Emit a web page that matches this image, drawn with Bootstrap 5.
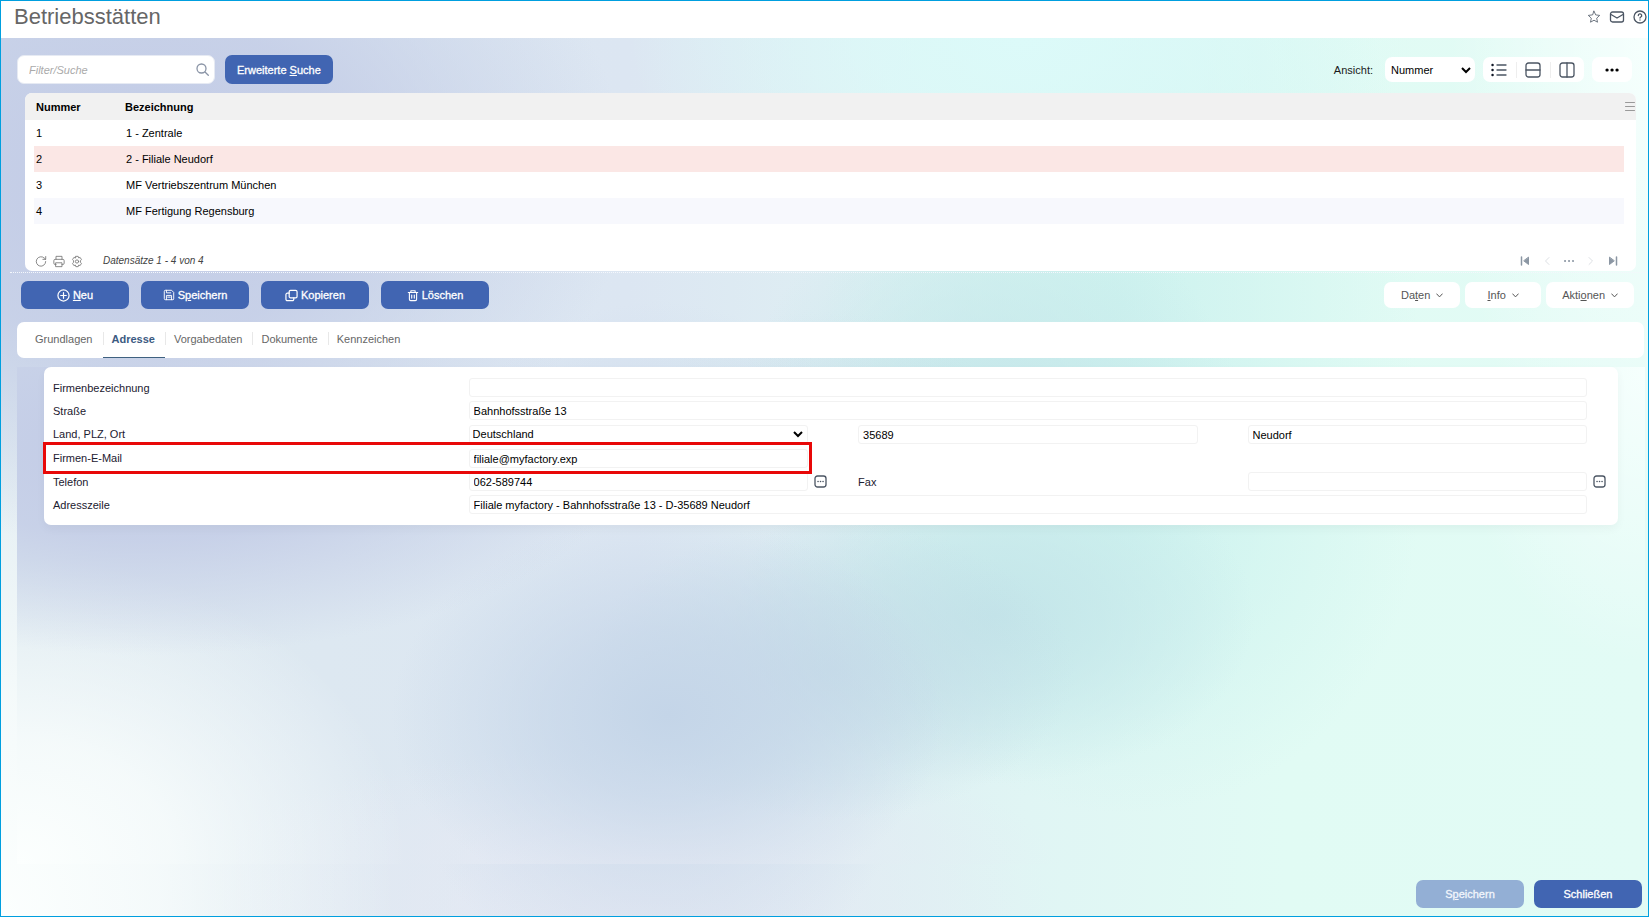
<!DOCTYPE html>
<html lang="de">
<head>
<meta charset="utf-8">
<meta name="viewport" content="width=device-width, initial-scale=1">
<title>Betriebsstätten</title>
<link rel="stylesheet" href="https://cdn.jsdelivr.net/npm/bootstrap@5.3.0/dist/css/bootstrap.min.css">
<style>
  :root { --mf-blue: #4165b2; --mf-frame: #009fdf; }
  body { font-family: "Liberation Sans", Arial, sans-serif; font-size: 11px; line-height: 16px; color: #1a1a1a; }
  .wash {
    background:
      radial-gradient(ellipse 12% 60% at 100% 0%, #f6fffd 0%, #f6fffd00 100%),
      radial-gradient(ellipse 24% 26% at 62% 0%, #dcfaf9 0%, #dcfaf9b3 40%, #dcfaf900 100%),
      radial-gradient(ellipse 30% 42% at 8% 16%, #c2cbe6 0%, #c2cbe6cc 45%, #c2cbe600 100%),
      radial-gradient(ellipse 17% 40% at 40% 70%, #c4d5e8 0%, #c4d5e8a6 42%, #c4d5e800 100%),
      radial-gradient(ellipse 15% 30% at 50% 61%, #c3dbe7cc 0%, #c3dbe780 42%, #c3dbe700 100%),
      radial-gradient(ellipse 16% 34% at 60% 50%, #c3e5e9 0%, #c3e5e9a6 42%, #c3e5e900 100%),
      radial-gradient(ellipse 18% 60% at 68% 30%, #cef3ef 0%, #cef3efa6 42%, #cef3ef00 100%),
      radial-gradient(ellipse 24% 62% at 0% 100%, #fcfffe 0%, #fafefdcc 40%, #fafefd00 100%),
      radial-gradient(ellipse 26% 24% at 38% 100%, #e6eaf4 0%, #e6eaf400 100%),
      linear-gradient(90deg, #deeaf0 0%, #dce6f2 38%, #e0f5f4 62%, #e1fbf4 78%, #e2fbf5 100%);
  }
  .app { border: 1px solid var(--mf-frame); }
  .titlebar { height: 37px; padding: 0 1px 6px 13px; }
  .titlebar h1 { font-size: 22px; line-height: 30px; color: #666; font-weight: 400; }
  svg { display: block; fill: none; stroke: currentColor; stroke-width: 1.3; stroke-linecap: round; stroke-linejoin: round; }
  .icon-btn { border: 0; background: none; padding: 0; color: #4b5563; }
  .btn { font-size: 11px; line-height: 16px; border: 0; border-radius: 7px; padding: 0 12px; }
  .btn-mf { --bs-btn-bg: var(--mf-blue); --bs-btn-color: #fff; --bs-btn-hover-bg: #36569b; --bs-btn-hover-color: #fff;
    --bs-btn-disabled-bg: #93afd5; --bs-btn-disabled-color: #f2f6fc; --bs-btn-disabled-opacity: 1; }
  .btn-action { width: 108px; height: 28px; gap: 3px; -webkit-text-stroke: 0.3px; }
  .btn-soft { --bs-btn-bg: #fff; --bs-btn-color: #555; --bs-btn-hover-bg: #f4f7fb; height: 26px; min-width: 76px; gap: 6px; }
  .btn-soft svg { stroke-width: 1; }
  .btn-soft.btn-more { min-width: 40px; height: 25px; }
  .searchbar { padding: 17px 16px 0 16px; }
  .searchbox { width: 198px; height: 29px; background: #fff; border-radius: 7px; padding: 0 5px 0 11px; border: 1px solid #e6eaf3; }
  .searchbox input { border: 0; outline: 0; min-width: 0; font-style: italic; padding: 0; background: none; }
  .searchbox input::placeholder { color: #aaa; }
  .searchbox .icon-btn { color: #8a94a6; }
  .btn-search { height: 29px; margin-left: 10px; -webkit-text-stroke: 0.3px; }
  .pill { background: #fff; height: 25px; border-radius: 7px; }
  .pill button { padding: 0 9px 0 8px; }
  .pill button + button { border-left: 1px solid #eee; }
  .form-select { font-size: 11px; line-height: 16px; color: #000; border: 0; background-color: #fff; background-size: 10px 10px; 
    background-image: url("data:image/svg+xml,%3Csvg xmlns='http://www.w3.org/2000/svg' viewBox='0 0 10 10'%3E%3Cpath d='M1 3l4 4 4-4' fill='none' stroke='%23000' stroke-width='2'/%3E%3C/svg%3E"); }
  .view-select { width: 90px; height: 25px; border-radius: 7px; padding: 0 18px 0 6px; background-position: right 4px center; }
  .list-card { margin: 9px 12px 0 24px; background: #fff; border-radius: 7px; overflow: hidden; }
  .grid-table { font-size: 11px; line-height: 16px; color: #000; width: 100%; border-collapse: collapse; }
  .grid-table td, .grid-table th { height: 26px; padding: 0 2px; }
  .grid-table thead th { height: 27px; background: #f1f1f1; font-weight: 700; }
  .grid-table th + th { padding-left: 1px; }
  .grid-table th:first-child, .grid-table td:first-child { width: 90px; }
  .grid-table .picked td { background: #fbe7e5; }
  .grid-table .striped td { background: #f7f8fd; }
  .list-body { padding: 0 12px 0 9px; background: linear-gradient(#f1f1f1 27px, #fff 27px); }
  .list-menu { position: absolute; right: 1px; top: 8px; color: #999; }
  .list-foot { padding: 27px 18px 0 10px; height: 47px; }
  .list-foot .icon-btn { color: #777; }
  .list-foot svg { stroke-width: 1; }
  .list-foot i { font-size: 10px; margin-left: 20px; color: #444; }
  .record-actions { border-top: 1px dotted #f4f7fc; margin: 1px 0 0 9px; padding: 8px 14px 0 11px; }
  .tab-strip { margin: 13px 4px 0 16px; background: #fff; border-radius: 7px; height: 36px; padding-left: 9px; }
  .tab-strip .nav-link { color: #666; padding: 9px 10px 0 9px; height: 36px; line-height: 16px; }
  .tab-strip .nav-item { position: relative; }
  .tab-strip .nav-item + .nav-item::before { content: ""; position: absolute; left: 0; top: 10px; height: 13px; border-left: 1px solid #e8e8e8; }
  .tab-strip .nav-link.active { color: #3c5a82; font-weight: 700; border-bottom: 1px solid #3f6180; }
  .detail { margin: 9px 3px 0 16px; padding: 0 27px 24px; }
  .address-card { background: #fff; border-radius: 7px; padding: 9px 31px 9px 9px; box-shadow: 0 4px 10px #0000000a; }
  .address-row { display: grid; grid-template-columns: 14fr 13fr 13fr 13fr; column-gap: 50px; height: 23px; align-items: center; }
  .address-row.tall { height: 24px; }
  .address-row label { color: #1c2030; }
  .span-rest { grid-column: 2 / -1; }
  .field { width: 100%; flex: 0 0 100%; height: 19px; border: 1px solid #f2f2f2; border-radius: 3px; padding: 1px 4px 0; color: #000; background-color: #fff; min-width: 0; }
  .form-select.field { padding: 0 20px 0 3px; border: 1px solid #f2f2f2; background-position: right 4px center; }
  .field + .icon-btn { margin-left: 6px; }
  .marker { position: relative; }
  .marker::after { content: ""; position: absolute; left: -10px; top: -4px; height: 32px; width: calc(50% + 2px); border: 3px solid #e80808; pointer-events: none; }
  .footer-bar { padding: 16px 6px 8px; gap: 10px; }
</style>
</head>
<body>
<div class="app min-vh-100 d-flex flex-column">
  <header class="titlebar d-flex justify-content-between align-items-center bg-white">
    <h1 class="m-0">Betriebsstätten</h1>
    <div class="d-flex align-items-center gap-2">
      <button class="icon-btn" type="button" aria-label="Favorit"><svg width="14" height="14" viewBox="0 0 14 14" stroke="#777"><path stroke-width=".8" d="M7 1.200l1.700 3.700 4 .5-3 2.800.8 4L7 10.200l-3.500 2 .8-4-3-2.800 4-.5z"/></svg></button>
      <button class="icon-btn" type="button" aria-label="Nachricht"><svg width="16" height="14" viewBox="0 0 16 14"><rect x="1.500" y="2" width="13" height="10" rx="2"/><path d="M2 4.500l6 3.500 6-3.500"/></svg></button>
      <button class="icon-btn" type="button" aria-label="Hilfe"><svg width="14" height="14" viewBox="0 0 14 14"><circle cx="7" cy="7" r="6"/><path d="M5.300 5.500a1.700 1.700 0 1 1 2.500 1.500c-.5.300-.8.500-.8 1M7 10v.1"/></svg></button>
    </div>
  </header>

  <main class="wash flex-grow-1 d-flex flex-column">
    <div class="searchbar d-flex align-items-center">
      <div class="searchbox d-flex align-items-center">
        <input class="flex-grow-1" type="text" placeholder="Filter/Suche" aria-label="Filter/Suche">
        <button class="icon-btn" type="button" aria-label="Suchen"><svg width="13" height="13" viewBox="0 0 13 13"><circle cx="5.500" cy="5.500" r="4.500"/><path d="M9 9l3.300 3.300"/></svg></button>
      </div>
      <button class="btn btn-mf btn-search" type="button">Erweiterte <u>S</u>uche</button>
      <div class="ms-auto d-flex align-items-center">
        <label class="me-2 pe-1" for="view">Ansicht:</label>
        <select class="form-select view-select me-2" id="view"><option>Nummer</option></select>
        <div class="pill d-flex align-items-center me-2">
          <button class="icon-btn" type="button" aria-label="Liste"><svg width="16" height="16" viewBox="0 0 16 16"><path d="M6 3h9M6 8h9M6 13h9"/><path d="M1.500 3h.1M1.500 8h.1M1.500 13h.1" stroke="#111827" stroke-width="2.400"/></svg></button>
          <button class="icon-btn" type="button" aria-label="Horizontal geteilt"><svg width="16" height="16" viewBox="0 0 16 16"><rect x="1" y="1" width="14" height="14" rx="2.500"/><path d="M1 8h14"/></svg></button>
          <button class="icon-btn" type="button" aria-label="Vertikal geteilt"><svg width="16" height="16" viewBox="0 0 16 16"><rect x="1" y="1" width="14" height="14" rx="2.500"/><path d="M8 1v14"/></svg></button>
        </div>
        <button class="btn btn-soft btn-more" type="button" aria-label="Mehr"><svg width="16" height="6" viewBox="0 0 16 6"><path d="M3 3h.1M8 3h.1M13 3h.1" stroke="#000" stroke-width="3.200"/></svg></button>
      </div>
    </div>

    <section class="list-card">
      <div class="list-body position-relative">
        <table class="grid-table">
          <thead><tr><th>Nummer</th><th>Bezeichnung</th></tr></thead>
          <tbody>
            <tr><td>1</td><td>1 - Zentrale</td></tr>
            <tr class="picked"><td>2</td><td>2 - Filiale Neudorf</td></tr>
            <tr><td>3</td><td>MF Vertriebszentrum München</td></tr>
            <tr class="striped"><td>4</td><td>MF Fertigung Regensburg</td></tr>
          </tbody>
        </table>
        <button class="icon-btn list-menu" type="button" aria-label="Spalten"><svg width="10" height="10" viewBox="0 0 10 10"><path stroke-width="1" d="M.5 1.500h9M.5 5.500h9M.5 9.500h9"/></svg></button>
      </div>
      <div class="list-foot d-flex align-items-center">
        <div class="d-flex" style="gap:6px">
          <button class="icon-btn" type="button" aria-label="Aktualisieren"><svg width="12" height="13" viewBox="0 0 14 14"><path d="M12.500 7a5.500 5.500 0 1 1-1.700-4L12.500 4.500M12.500 1.200v3.300H9.200"/></svg></button>
          <button class="icon-btn" type="button" aria-label="Drucken"><svg width="12" height="13" viewBox="0 0 14 14"><path d="M3.500 4.500V1h7v3.500M3.500 10.500h-1A1.500 1.500 0 0 1 1 9V6a1.500 1.500 0 0 1 1.500-1.500h9A1.500 1.500 0 0 1 13 6v3a1.500 1.500 0 0 1-1.500 1.500h-1M3.500 8.500h7V13h-7z"/></svg></button>
          <button class="icon-btn" type="button" aria-label="Einstellungen"><svg width="12" height="13" viewBox="0 0 14 14"><path d="M5.600 1h2.800l.5 1.800 1.800-.5 1.500 2.500L11 6.100v1.800l1.200 1.300-1.500 2.500-1.800-.5-.5 1.800H5.600l-.5-1.800-1.800.5-1.500-2.500L3 7.900V6.100L1.800 4.800l1.500-2.500 1.800.5z"/><circle cx="7" cy="7" r="1.900"/></svg></button>
        </div>
        <i>Datensätze 1 - 4 von 4</i>
        <div class="ms-auto d-flex align-items-center gap-2">
          <button class="icon-btn pe-1" type="button" aria-label="Erste"><svg width="10" height="10" viewBox="0 0 10 10"><path d="M1.500 1v8" stroke="#8b96a3" stroke-width="1.500"/><path d="M8.500 1.500v7L4 5z" fill="#8b96a3" stroke="#8b96a3"/></svg></button>
          <button class="icon-btn pe-1" type="button" aria-label="Zurück"><svg width="10" height="10" viewBox="0 0 10 10"><path d="M7 1.500L3.500 5 7 8.500" stroke="#dcdfe3"/></svg></button>
          <button class="icon-btn pe-1" type="button" aria-label="Seiten"><svg width="10" height="10" viewBox="0 0 10 10"><path d="M1 5h.1M5 5h.1M9 5h.1" stroke="#8b96a3" stroke-width="2"/></svg></button>
          <button class="icon-btn pe-1" type="button" aria-label="Weiter"><svg width="10" height="10" viewBox="0 0 10 10"><path d="M3 1.500L6.500 5 3 8.500" stroke="#dcdfe3"/></svg></button>
          <button class="icon-btn" type="button" aria-label="Letzte"><svg width="10" height="10" viewBox="0 0 10 10"><path d="M8.500 1v8" stroke="#8b96a3" stroke-width="1.500"/><path d="M1.500 1.500v7L6 5z" fill="#8b96a3" stroke="#8b96a3"/></svg></button>
        </div>
      </div>
    </section>

    <div class="record-actions d-flex align-items-center">
      <div class="d-flex" style="gap:12px">
        <button class="btn btn-mf btn-action d-flex align-items-center justify-content-center" type="button"><svg width="13" height="13" viewBox="0 0 14 14"><circle cx="7" cy="7" r="6"/><path d="M7 4v6M4 7h6"/></svg><span><u>N</u>eu</span></button>
        <button class="btn btn-mf btn-action d-flex align-items-center justify-content-center" type="button"><svg width="12" height="12" viewBox="0 0 14 14"><path stroke-width="1.100" d="M1.500 2.500a1 1 0 0 1 1-1H10l2.500 2.500v7.500a1 1 0 0 1-1 1h-9a1 1 0 0 1-1-1zM4 1.500v3h5M4 12.500v-5h6v5M5.500 9.500h3"/></svg><span>S<u>p</u>eichern</span></button>
        <button class="btn btn-mf btn-action d-flex align-items-center justify-content-center" type="button"><svg width="13" height="13" viewBox="0 0 14 14"><rect x="4.500" y="1.500" width="8.500" height="8" rx="1.500"/><path d="M4.500 4.500H2.500A1.500 1.500 0 0 0 1 6v5a1.500 1.500 0 0 0 1.500 1.500h5.500A1.500 1.500 0 0 0 9.500 11V9.500"/></svg><span>Kopieren</span></button>
        <button class="btn btn-mf btn-action d-flex align-items-center justify-content-center" type="button"><svg width="12" height="13" viewBox="0 0 14 14"><path d="M1.500 3.500h11M4.500 3.500v-2h5v2M2.800 3.500v8a1.500 1.500 0 0 0 1.500 1.500h5.400a1.500 1.500 0 0 0 1.500-1.500v-8M5.500 6.500v3.500M8.500 6.500v3.500"/></svg><span>Löschen</span></button>
      </div>
      <div class="ms-auto d-flex" style="gap:5px">
        <button class="btn btn-soft d-flex align-items-center justify-content-center" type="button"><span>Da<u>t</u>en</span><svg width="7" height="5" viewBox="0 0 7 5"><path d="M.7.9l2.800 3L6.300.9"/></svg></button>
        <button class="btn btn-soft d-flex align-items-center justify-content-center" type="button"><span><u>I</u>nfo</span><svg width="7" height="5" viewBox="0 0 7 5"><path d="M.7.9l2.800 3L6.300.9"/></svg></button>
        <button class="btn btn-soft d-flex align-items-center justify-content-center px-3" type="button"><span>Akti<u>o</u>nen</span><svg width="7" height="5" viewBox="0 0 7 5"><path d="M.7.9l2.800 3L6.300.9"/></svg></button>
      </div>
    </div>

    <ul class="nav tab-strip">
      <li class="nav-item"><a class="nav-link" href="#">Grundlagen</a></li>
      <li class="nav-item"><a class="nav-link active" href="#" aria-current="page">Adresse</a></li>
      <li class="nav-item"><a class="nav-link" href="#">Vorgabedaten</a></li>
      <li class="nav-item"><a class="nav-link" href="#">Dokumente</a></li>
      <li class="nav-item"><a class="nav-link" href="#">Kennzeichen</a></li>
    </ul>

    <section class="detail wash flex-grow-1">
      <form class="address-card">
        <div class="address-row"><label for="firm">Firmenbezeichnung</label><input class="field span-rest" id="firm" type="text"></div>
        <div class="address-row"><label for="street">Straße</label><input class="field span-rest" id="street" type="text" value="Bahnhofsstraße 13"></div>
        <div class="address-row tall"><label for="country">Land, PLZ, Ort</label><select class="form-select field" id="country"><option>Deutschland</option></select><input class="field" type="text" value="35689" aria-label="PLZ"><input class="field" type="text" value="Neudorf" aria-label="Ort"></div>
        <div class="address-row tall marker"><label for="mail">Firmen-E-Mail</label><input class="field" id="mail" type="text" value="filiale@myfactory.exp"></div>
        <div class="address-row"><label for="phone">Telefon</label>
          <div class="d-flex align-items-center"><input class="field" id="phone" type="text" value="062-589744"><button class="icon-btn" type="button" aria-label="Wählen"><svg width="13" height="13" viewBox="0 0 13 13"><rect x="1" y="1" width="11" height="11" rx="2.500"/><path d="M4 6.500h.1M6.500 6.500h.1M9 6.500h.1" stroke-width="1.500"/></svg></button></div>
          <label for="fax">Fax</label>
          <div class="d-flex align-items-center"><input class="field" id="fax" type="text"><button class="icon-btn" type="button" aria-label="Fax senden"><svg width="13" height="13" viewBox="0 0 13 13"><rect x="1" y="1" width="11" height="11" rx="2.500"/><path d="M4 6.500h.1M6.500 6.500h.1M9 6.500h.1" stroke-width="1.500"/></svg></button></div>
        </div>
        <div class="address-row"><label for="line">Adresszeile</label><input class="field span-rest" id="line" type="text" value="Filiale myfactory - Bahnhofsstraße 13 - D-35689 Neudorf"></div>
      </form>
    </section>

    <footer class="footer-bar d-flex justify-content-end">
      <button class="btn btn-mf btn-action" type="button" disabled>S<u>p</u>eichern</button>
      <button class="btn btn-mf btn-action" type="button">Schließen</button>
    </footer>
  </main>
</div>
<script src="https://cdn.jsdelivr.net/npm/bootstrap@5.3.0/dist/js/bootstrap.bundle.min.js"></script>
</body>
</html>
